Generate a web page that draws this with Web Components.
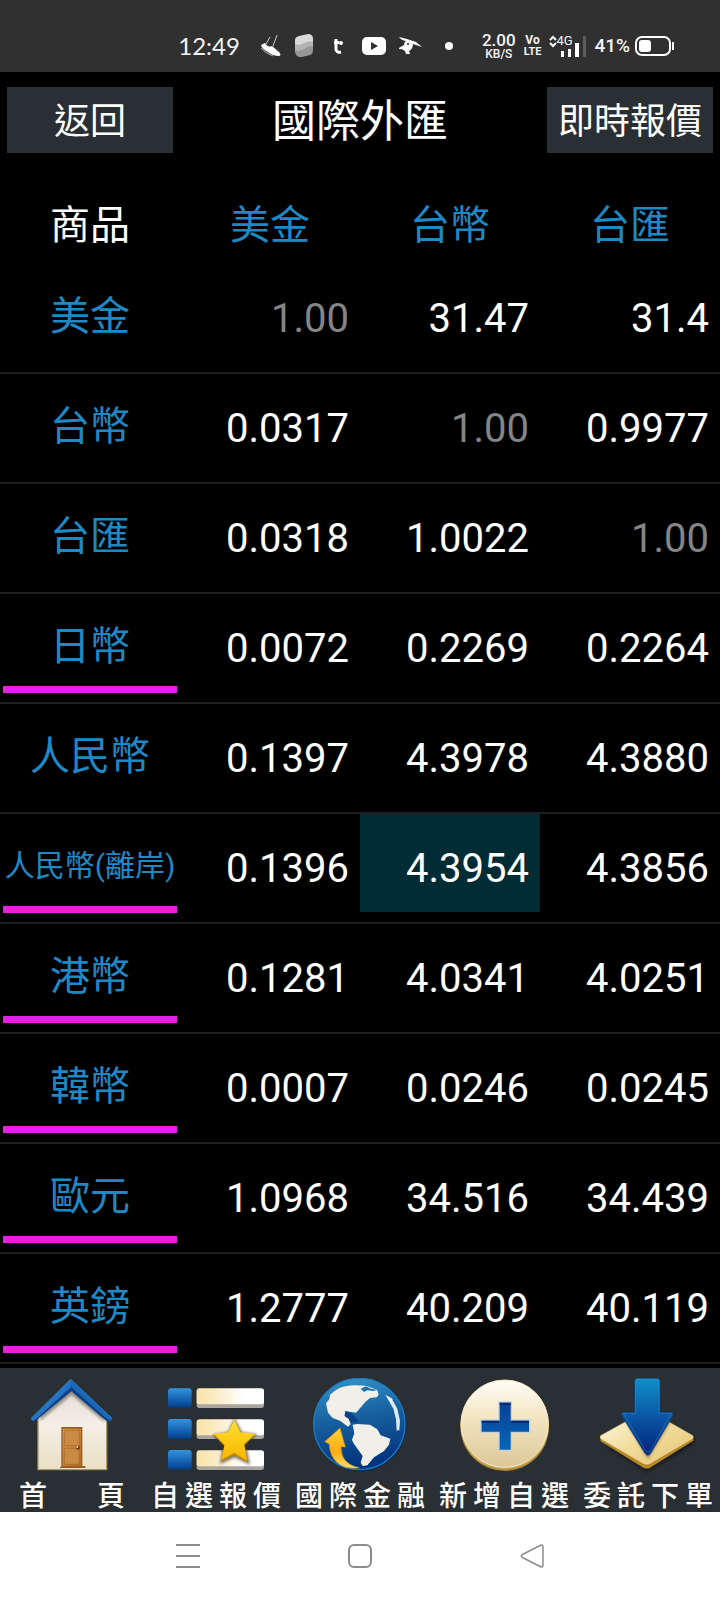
<!DOCTYPE html>
<html lang="zh-Hant">
<head>
<meta charset="utf-8">
<meta name="viewport" content="width=device-width, initial-scale=1">
<title>國際外匯</title>
<style>
	body {
		margin: 0;
		min-height: 100vh;
		display: flex;
		flex-direction: column;
		background: #000;
		color: #fff;
		font-family: Roboto, "Noto Sans CJK TC", sans-serif;
	}
	main {
		flex: 1;
	}
</style>
</head>
<body>
<status-bar></status-bar>
<page-header>
	<button slot="left" type="button">返回</button>
	國際外匯
	<button slot="right" type="button">即時報價</button>
</page-header>
<main>
	<rate-table></rate-table>
</main>
<tool-bar>
	<tool-item class="short" label="首 頁">
		<svg viewBox="72 84 288 288">
			<defs>
				<linearGradient id="wall" x1="0" y1="0" x2="0" y2="1"><stop offset="0" stop-color="#e2ddd3"/><stop offset=".45" stop-color="#f3efe6"/><stop offset="1" stop-color="#ebdfc4"/></linearGradient>
				<linearGradient id="roof" x1="0" y1="0" x2="1" y2="1"><stop offset="0" stop-color="#3da0e8"/><stop offset="1" stop-color="#0b4fa5"/></linearGradient>
				<linearGradient id="door" x1="0" y1="0" x2="1" y2="1"><stop offset="0" stop-color="#d89a52"/><stop offset="1" stop-color="#b26a22"/></linearGradient>
				<filter id="soft"><feGaussianBlur stdDeviation="5"/></filter>
			</defs>
			<path d="M114 200L214 112L320 200V359H114Z" fill="url(#wall)" stroke="#a3966f" stroke-width="4"/>
			<path d="M120 212L214 134L314 216V198L214 116L120 196Z" fill="#5d554a" opacity=".65" filter="url(#soft)"/>
			<path d="M180 354V350H184V231H247V348H256V354Z" fill="#9a5b1e"/>
			<path d="M188 236H243V348H188Z" fill="url(#door)"/>
			<path d="M193 241H238V287H193ZM193 295H238V343H193Z" fill="#c98a43" stroke="#a8672a" stroke-width="2"/>
			<circle cx="234" cy="293" r="6" fill="#6e3a12"/><circle cx="232" cy="291" r="3" fill="#f6dcae"/>
			<path d="M92 207L212 87L214 110L100 214Z" fill="url(#roof)"/>
			<path d="M212 87L338 206L330 214L214 110Z" fill="#1768bd"/>
			<path d="M100 214L214 110L330 214L322 215L214 124L106 213Z" fill="#0a3f8b"/>
			<path d="M93 205L212 88L336 205" fill="none" stroke="#2f8bd8" stroke-width="2"/>
		</svg>
	</tool-item>
	<tool-item label="自選報價">
		<svg viewBox="504 84 288 288">
			<defs>
				<linearGradient id="cube" x1="0" y1="0" x2="0" y2="1"><stop offset="0" stop-color="#3493df"/><stop offset=".8" stop-color="#0b4f9e"/><stop offset="1" stop-color="#063b7c"/></linearGradient>
				<linearGradient id="strip" x1="0" y1="0" x2="1" y2="0"><stop offset="0" stop-color="#fbe3a8"/><stop offset=".3" stop-color="#fbecc9"/><stop offset=".7" stop-color="#fff"/></linearGradient>
				<linearGradient id="star" x1="0" y1="0" x2="0" y2="1"><stop offset="0" stop-color="#ffe02e"/><stop offset="1" stop-color="#f8b400"/></linearGradient>
			</defs>
			<g fill="#aaa69d"><rect x="590" y="117" width="202" height="57" rx="8"/><rect x="590" y="210" width="202" height="57" rx="8"/><rect x="590" y="303" width="202" height="57" rx="8"/></g>
			<g fill="url(#strip)"><rect x="590" y="115" width="202" height="48" rx="8"/><rect x="590" y="208" width="202" height="48" rx="8"/><rect x="590" y="301" width="202" height="48" rx="8"/></g>
			<g fill="url(#cube)"><rect x="504" y="115" width="71" height="58" rx="9"/><rect x="504" y="207" width="71" height="60" rx="9"/><rect x="504" y="300" width="71" height="59" rx="9"/></g>
			<path d="M703 205L726 247L772 252L738 286L750 344L703 322L660 342L668 290L638 254L684 246Z" fill="#403820" opacity=".7" filter="url(#soft)"/>
			<path d="M703 211L721 250L766 254L733 286L744 339L703 314L663 334L673 288L641 254L685 249Z" fill="#c98a00"/>
			<path d="M703 211L721 247L766 251L732 282L742 332L703 308L664 329L674 284L641 251L685 247Z" fill="url(#star)"/>
		</svg>
	</tool-item>
	<tool-item label="國際金融">
		<svg viewBox="66 84 288 288">
			<defs>
				<linearGradient id="sea" x1="0" y1="0" x2=".2" y2="1"><stop offset="0" stop-color="#3497cd"/><stop offset=".5" stop-color="#17609f"/><stop offset="1" stop-color="#03357e"/></linearGradient>
				<linearGradient id="turn" x1="0" y1="0" x2="0" y2="1"><stop offset="0" stop-color="#ffd23c"/><stop offset=".6" stop-color="#ffac12"/><stop offset="1" stop-color="#f7e27c"/></linearGradient>
			</defs>
			<circle cx="211" cy="226" r="138" fill="#08244e"/>
			<circle cx="208" cy="222" r="137" fill="url(#sea)" stroke="#1c7cc2" stroke-width="4"/>
			<path d="M135 122C155 106 190 103 228 107L262 120L266 134L260 142L240 144L226 156L198 188L166 183L164 198L176 206L182 222L174 230L150 212L128 204L114 188L108 160L118 148L120 134Z" fill="#f0f0e9"/>
			<path d="M212 116L228 109L243 116L262 120L250 123L232 121L222 126Z" fill="#1f74ae"/>
			<path d="M188 224L202 222L240 224L262 238L272 256L301 266L297 284L282 303L252 322L232 346L218 348L212 338L218 318L192 282L186 270L193 250Z" fill="#f0f0e9"/>
			<path d="M286 134L304 144L322 176L330 212L328 240L320 242L318 208L310 176Z" fill="#dcebf2"/>
			<path d="M290 140L308 148L304 158Z" fill="#f5f5ef"/>
			<path d="M166 184L184 190L208 214L182 219L176 206L164 198Z" fill="#0b4285"/>
			<path d="M150 234L166 291L153 290C154 322 166 344 208 353C168 360 121 344 118 282L104 275Z" fill="url(#turn)" stroke="#e18a00" stroke-width="2"/>
		</svg>
	</tool-item>
	<tool-item label="新增自選">
		<svg viewBox="498 84 288 288">
			<defs>
				<linearGradient id="coin" x1="0" y1="0" x2="0" y2="1"><stop offset="0" stop-color="#fffdf6"/><stop offset=".45" stop-color="#f2e4bf"/><stop offset="1" stop-color="#dcc798"/></linearGradient>
				<linearGradient id="plus" x1="0" y1="0" x2="0" y2="1"><stop offset="0" stop-color="#083f94"/><stop offset="1" stop-color="#0766b6"/></linearGradient>
			</defs>
			<circle cx="644" cy="230" r="133" fill="#a07b2f"/>
			<circle cx="644" cy="226" r="133" fill="#c8a659"/>
			<circle cx="644" cy="221" r="131" fill="url(#coin)" stroke="#f6ebcb" stroke-width="3"/>
			<path d="M627 156H664V210H719V247H664V301H627V247H573V210H627Z" fill="url(#plus)" stroke="#c5cfdd" stroke-width="4"/>
			<path d="M629 158H662V165H629ZM575 212H627V219H575ZM664 212H717V219H664Z" fill="#042c75"/>
		</svg>
	</tool-item>
	<tool-item label="委託下單">
		<svg viewBox="120 84 288 288">
			<defs>
				<linearGradient id="plate" x1="0" y1="0" x2="1" y2="1"><stop offset="0" stop-color="#fffbe9"/><stop offset=".5" stop-color="#f1dc9c"/><stop offset="1" stop-color="#e3c46f"/></linearGradient>
				<linearGradient id="down" x1="0" y1="0" x2="0" y2="1"><stop offset="0" stop-color="#0d90c8"/><stop offset=".5" stop-color="#0a56a4"/><stop offset="1" stop-color="#02247a"/></linearGradient>
			</defs>
			<path d="M140 290L262 366L404 280V262Z" fill="#111" opacity=".6" filter="url(#soft)"/>
			<path d="M120 260L262 338L400 260V272L270 353Q261 358 250 353L122 274Z" fill="#b8872a"/>
			<path d="M122 257L252 185Q262 180 272 185L398 257Q402 262 396 266L270 340Q261 345 250 340L124 267Q119 262 122 257Z" fill="url(#plate)" stroke="#f3dda0" stroke-width="2"/>
			<path d="M190 200L264 326L340 200Z" fill="#4a3d1c" opacity=".6" filter="url(#soft)"/>
			<path d="M232 85H293Q300 86 300 94V187H334Q344 189 338 197L272 310Q264 321 255 310L186 198Q181 189 190 187H224V94Q224 86 232 85Z" fill="url(#down)" stroke="#0b3d80" stroke-width="2"/>
			<path d="M233 88H292Q297 89 297 94V190H334L271 303Q264 312 257 303L190 190H227V94Q227 89 233 88Z" fill="none" stroke="#3a8fd0" stroke-width="2" opacity=".7"/>
		</svg>
	</tool-item>
</tool-bar>
<nav-bar></nav-bar>

<script>
class StatusBar extends HTMLElement {
	constructor() {
		super();
		this.attachShadow({ mode: "open" });
		this.shadowRoot.innerHTML = `
    <style>
    :host {
      display: flex;
      align-items: center;
      justify-content: flex-end;
      gap: 8px;
      box-sizing: border-box;
      height: 72px;
      padding: 20px 46px 0 0;
      background: #303030;
      color: #f4f4f4;
      font-family: Lato, sans-serif;
    }
    svg {
      display: block;
      flex: none;
    }
    .apps {
      display: flex;
      align-items: center;
      gap: 12px;
      margin-right: 8px;
    }
    .time {
      font-size: 24px;
      line-height: 28px;
      margin-right: 8px;
    }
    .stack {
      display: flex;
      flex-direction: column;
      align-items: center;
      font: 500 12px/12px Roboto, sans-serif;
    }
    .stack b {
      font-size: 17px;
      font-weight: 500;
      line-height: 16px;
    }
    .narrow {
      font: 700 11px/12px Roboto, sans-serif;
    }
    .narrow b {
      font-size: 12px;
      font-weight: 700;
      line-height: 12px;
    }
    .signal {
      display: grid;
      position: relative;
    }
    .signal span {
      position: absolute;
      left: 7px;
      top: 0;
      font: 400 13px/12px Roboto, sans-serif;
    }
    .battery {
      display: flex;
      align-items: center;
      gap: 5px;
      font: 500 19px/24px Roboto, sans-serif;
    }
    </style>
    <div class="apps">
      <span class="time">12:49</span>
      <svg width="22" height="24" viewBox="0 0 22 24">
        <path d="M10 3L6 10M17 1L13 12" stroke="#ccc" stroke-width="1"/>
        <path d="M1 11L5 9Q8 14 12 12L19 18Q22 21 19 22Q13 22 8 18Q2 15 1 11Z" fill="#fff"/>
        <path d="M1 14Q5 19 13 22" fill="none" stroke="#bbb"/>
      </svg>
      <svg width="20" height="24" viewBox="0 0 20 24">
        <path d="M1 9V18Q2 24 8 23L16 21Q19 20 19 16V9Z" fill="#969696"/>
        <path d="M1 7V16Q5 18 10 15Q15 11 19 13V5Z" fill="#b4b4b4"/>
        <path d="M1 6Q1 3 5 2L14 0Q19 0 19 5V8Q15 6 10 9Q5 12 1 10Z" fill="#dadada"/>
      </svg>
      <svg width="24" height="24" viewBox="0 0 24 24">
        <path d="M10 5V15Q10 19 15 18" fill="none" stroke="#fff" stroke-width="3"/>
        <path d="M8 7H13V10H8Z" fill="#fff"/>
        <circle cx="15" cy="9" r="2" fill="#fff"/>
      </svg>
      <svg width="24" height="24" viewBox="0 0 24 24">
        <rect y="3" width="24" height="18" rx="5" fill="#fff"/>
        <path d="M9 8L16 12L9 16Z" fill="#303030"/>
      </svg>
      <svg width="24" height="24" viewBox="0 0 24 24">
        <path d="M1 3L9 5L18 8L24 13L15 10Q15 15 11 17L12 20H8L7 17Q4 15 3 15Q1 16 1 14Q4 12 6 11Q6 8 8 7Q3 6 1 3Z" fill="#fff"/>
        <circle cx="10" cy="10" r="1" fill="#303030"/>
      </svg>
      <svg width="32" height="24" viewBox="0 0 32 24"><circle cx="15" cy="12" r="4" fill="#fff"/></svg>
    </div>
    <div class="stack"><b>2.00</b><span>KB/S</span></div>
    <div class="stack narrow"><b>Vo</b><span>LTE</span></div>
    <div class="signal">
      <svg width="37" height="22" viewBox="0 0 37 22">
        <path d="M1 5L4 2L7 5M1 8L4 11L7 8" fill="none" stroke="#fff" stroke-width="2"/>
        <path d="M12 16H15V22H12ZM19 14H22V22H19ZM26 8H30V22H26Z" fill="#fff"/>
        <path d="M34 1H37V22H34Z" fill="#5c5c5c"/>
      </svg>
      <span>4G</span>
    </div>
    <div class="battery">
      <span>41%</span>
      <svg width="39" height="20" viewBox="0 0 39 20">
        <rect x="1" y="1" width="34" height="18" rx="6" fill="none" stroke="#fff" stroke-width="2"/>
        <rect x="4" y="4" width="12" height="12" rx="3" fill="#fff"/>
        <path d="M37 6H39V14H37Z" fill="#fff"/>
      </svg>
    </div>
    `;
	}
}
customElements.define("status-bar", StatusBar);

class PageHeader extends HTMLElement {
	constructor() {
		super();
		this.attachShadow({ mode: "open" });
		this.shadowRoot.innerHTML = `
    <style>
    :host {
      display: grid;
      grid-template-columns: 166px 1fr 166px;
      align-items: center;
      padding: 15px 7px;
    }
    h1 {
      margin: 0;
      padding-top: 4px;
      font-size: 44px;
      font-weight: 400;
      line-height: 62px;
      text-align: center;
    }
    ::slotted(button) {
      height: 66px;
      padding: 0 0 4px;
      border: none;
      background: #2a2f33;
      color: #fff;
      font: inherit;
      font-size: 36px;
      white-space: nowrap;
    }
    </style>
    <slot name="left"></slot>
    <h1><slot></slot></h1>
    <slot name="right"></slot>
    `;
	}
}
customElements.define("page-header", PageHeader);

const COLUMNS = ["美金", "台幣", "台匯"];

// mark: pink bar under the name, active: index of the highlighted cell
const RATES = [
	{ name: "美金", values: ["1.00", "31.47", "31.4"] },
	{ name: "台幣", values: ["0.0317", "1.00", "0.9977"] },
	{ name: "台匯", values: ["0.0318", "1.0022", "1.00"] },
	{ name: "日幣", values: ["0.0072", "0.2269", "0.2264"], mark: true },
	{ name: "人民幣", values: ["0.1397", "4.3978", "4.3880"] },
	{ name: "人民幣(離岸)", values: ["0.1396", "4.3954", "4.3856"], mark: true, active: 1 },
	{ name: "港幣", values: ["0.1281", "4.0341", "4.0251"], mark: true },
	{ name: "韓幣", values: ["0.0007", "0.0246", "0.0245"], mark: true },
	{ name: "歐元", values: ["1.0968", "34.516", "34.439"], mark: true },
	{ name: "英鎊", values: ["1.2777", "40.209", "40.119"], mark: true },
];

class RateTable extends HTMLElement {
	constructor() {
		super();
		this.attachShadow({ mode: "open" });
		this.shadowRoot.innerHTML = `
    <style>
    :host {
      display: block;
    }
    table {
      width: 100%;
      table-layout: fixed;
      border-collapse: separate;
      border-spacing: 0;
      font-size: 40px;
    }
    th, td {
      padding: 0;
      font-weight: 400;
      vertical-align: top;
    }
    thead th {
      height: 76px;
      padding-top: 20px;
      line-height: 76px;
    }
    a {
      color: #1f89c6;
      text-decoration: none;
    }
    tbody th, tbody td {
      height: 108px;
      border-bottom: 2px solid #202020;
    }
    .name {
      display: block;
      height: 92px;
      margin: 0 3px;
      border-bottom: 7px solid transparent;
      line-height: 106px;
      white-space: nowrap;
    }
    .name.mark {
      border-color: #e620e2;
    }
    .name.long {
      font-size: 30px;
      line-height: 104px;
    }
    .value {
      height: 98px;
      padding-right: 11px;
      line-height: 110px;
      text-align: right;
    }
    .base {
      color: #858585;
    }
    .active {
      background: #002c36;
    }
    </style>
    <table>
      <thead><tr><th scope="col">商品</th></tr></thead>
      <tbody></tbody>
    </table>
    `;

		const head = this.shadowRoot.querySelector("thead tr");
		for (const column of COLUMNS) {
			head.insertAdjacentHTML("beforeend", `<th scope="col"><a href="#">${column}</a></th>`);
		}
		const body = this.shadowRoot.querySelector("tbody");
		for (const rate of RATES) {
			body.append(this.createRow(rate));
		}
	}

	createRow({ name, values, mark, active }) {
		const row = document.createElement("tr");
		const nameClass = `name ${mark ? "mark" : ""} ${name.length > 4 ? "long" : ""}`;
		const cells = values.map((value, i) => {
			const valueClass = `value ${value === "1.00" ? "base" : ""} ${i === active ? "active" : ""}`;
			return `<td><div class="${valueClass}">${value}</div></td>`;
		});
		row.innerHTML = `<th scope="row"><a class="${nameClass}" href="#">${name}</a></th>${cells.join("")}`;
		return row;
	}
}
customElements.define("rate-table", RateTable);

class ToolBar extends HTMLElement {
	constructor() {
		super();
		this.attachShadow({ mode: "open" });
		this.shadowRoot.innerHTML = `
    <style>
    :host {
      display: block;
      background: #2a2f33;
    }
    nav {
      display: grid;
      grid-template-columns: repeat(5, 1fr);
    }
    ::slotted(.short) {
      --label-width: 106px;
    }
    </style>
    <nav><slot></slot></nav>
    `;
	}
}
customElements.define("tool-bar", ToolBar);

class ToolItem extends HTMLElement {
	constructor() {
		super();
		this.attachShadow({ mode: "open" });
		this.shadowRoot.innerHTML = `
    <style>
    :host {
      display: block;
    }
    a {
      display: flex;
      flex-direction: column;
      align-items: center;
      gap: 8px;
      padding-top: 10px;
      color: #fff;
      text-decoration: none;
    }
    ::slotted(svg) {
      display: block;
      width: 96px;
      height: 96px;
    }
    span {
      width: var(--label-width, 130px);
      font-size: 28px;
      font-weight: 500;
      line-height: 30px;
      text-align: justify;
      text-align-last: justify;
    }
    </style>
    <a href="#"><slot></slot><span></span></a>
    `;
	}
	connectedCallback() {
		this.shadowRoot.querySelector("span").textContent = this.getAttribute("label");
	}
}
customElements.define("tool-item", ToolItem);

class NavBar extends HTMLElement {
	constructor() {
		super();
		this.attachShadow({ mode: "open" });
		this.shadowRoot.innerHTML = `
    <style>
    :host {
      display: flex;
      align-items: center;
      justify-content: center;
      gap: 148px;
      height: 88px;
      background: #fff;
    }
    button {
      padding: 0;
      border: none;
      background: none;
    }
    svg {
      display: block;
      fill: none;
      stroke: #8c8c8c;
      stroke-width: 2;
      stroke-linejoin: round;
    }
    </style>
    <button type="button" aria-label="Recents">
      <svg width="24" height="24"><path d="M0 1H24M0 12H24M0 23H24"/></svg>
    </button>
    <button type="button" aria-label="Home">
      <svg width="24" height="24"><rect x="1" y="1" width="22" height="22" rx="5"/></svg>
    </button>
    <button type="button" aria-label="Back">
      <svg width="24" height="24"><path d="M20 1.5Q23 0 23 3V21Q23 24 20 22.500L2.500 13.500Q0 12 2.500 10.500Z" stroke-width="1.500"/></svg>
    </button>
    `;
	}
}
customElements.define("nav-bar", NavBar);
</script>
</body>
</html>
